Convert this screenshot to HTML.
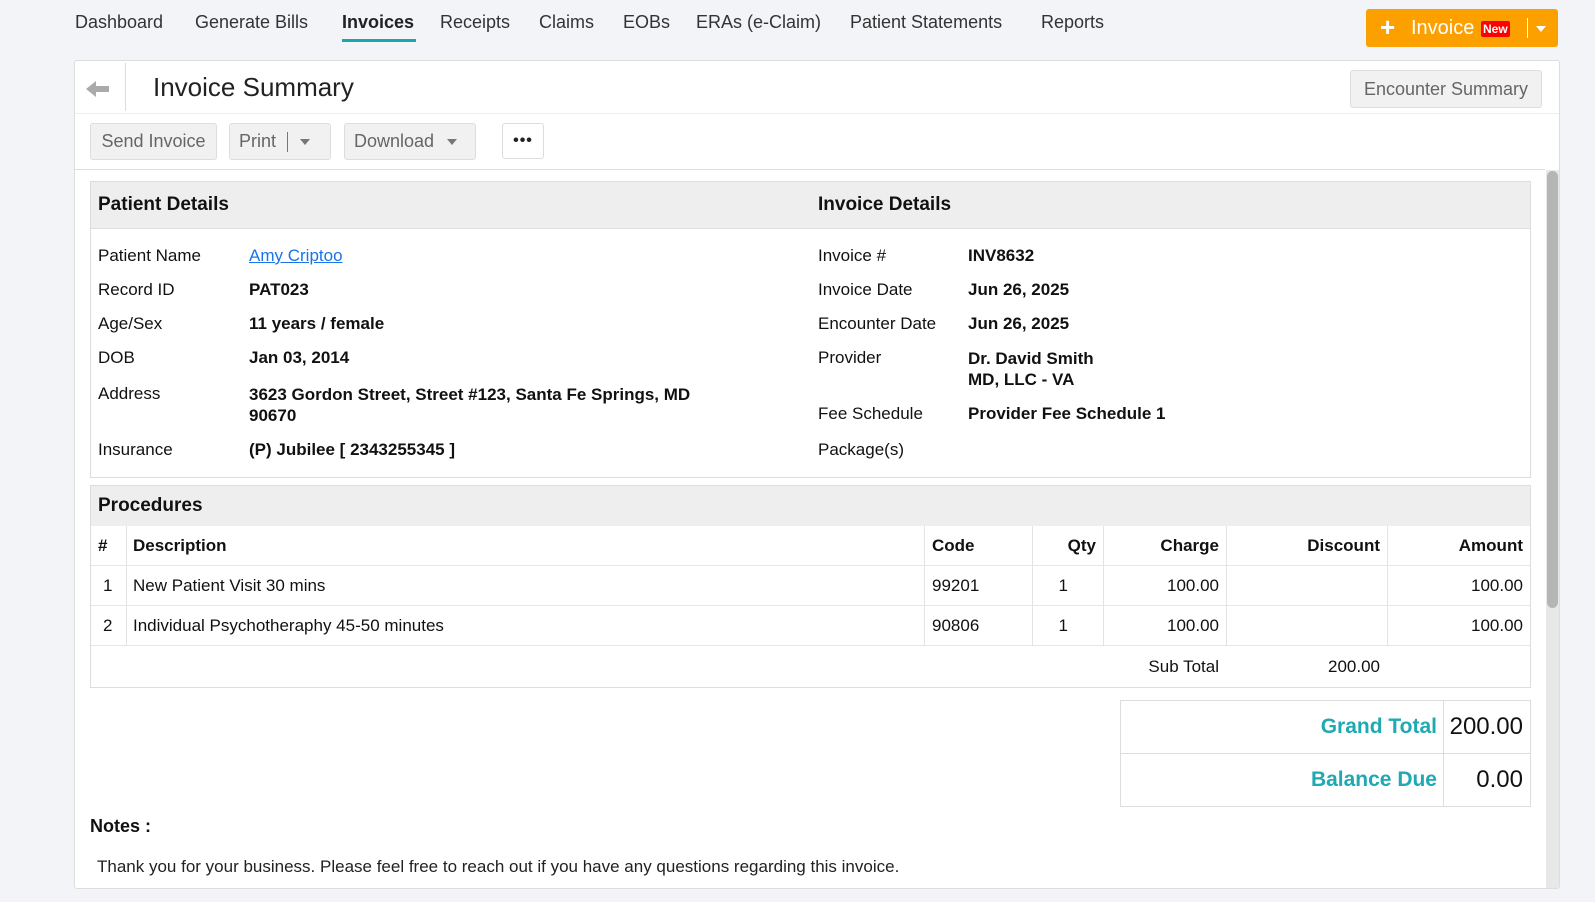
<!DOCTYPE html>
<html><head><meta charset="utf-8"><style>
*{box-sizing:border-box;margin:0;padding:0}
body{width:1595px;height:902px;background:#f3f4f8;font-family:"Liberation Sans",sans-serif;color:#111;position:relative;overflow:hidden;font-size:17px}
.a{position:absolute;white-space:nowrap}
.nav{top:12px;font-size:18px;color:#333}
.btn{position:absolute;background:#f1f1f1;border:1px solid #ddd;border-radius:3px;color:#666;font-size:18px;display:flex;align-items:center;justify-content:center}
.caret{display:inline-block;width:0;height:0;border-left:5px solid transparent;border-right:5px solid transparent;border-top:6px solid #777}
.box{position:absolute;border:1px solid #ddd;background:#fff}
.hd{background:#eee;border-bottom:1px solid #ddd;font-weight:bold;font-size:19px}
.lbl{font-size:17px;color:#111}
.val{font-size:17px;font-weight:bold}
.vl{position:absolute;top:40px;width:1px;background:#e3e3e3}
.hl{position:absolute;left:0;right:0;height:1px;background:#e6e6e6}
</style></head><body>
<div class="a nav" style="left:75px">Dashboard</div>
<div class="a nav" style="left:195px">Generate Bills</div>
<div class="a nav" style="left:342px;font-weight:bold;color:#222">Invoices</div>
<div class="a" style="left:342px;top:39px;width:74px;height:3px;background:#1aa6b0"></div>
<div class="a nav" style="left:440px">Receipts</div>
<div class="a nav" style="left:539px">Claims</div>
<div class="a nav" style="left:623px">EOBs</div>
<div class="a nav" style="left:696px">ERAs (e-Claim)</div>
<div class="a nav" style="left:850px">Patient Statements</div>
<div class="a nav" style="left:1041px">Reports</div>

<div class="a" style="left:1366px;top:9px;width:192px;height:38px;background:#fca000;border-radius:3px;color:#fff">
 <span class="a" style="left:14px;top:3px;font-size:26px;font-weight:bold">+</span>
 <span class="a" style="left:45px;top:8px;font-size:20px">Invoice</span>
 <span class="a" style="left:115px;top:12px;background:#f00;font-size:12px;font-weight:bold;padding:1px 2px;border-radius:2px">New</span>
 <span class="a" style="left:161px;top:9px;width:1px;height:20px;background:#fff"></span>
 <span class="a" style="left:170px;top:17px;width:0;height:0;border-left:5px solid transparent;border-right:5px solid transparent;border-top:6px solid #fff"></span>
</div>

<div class="a" style="left:74px;top:60px;width:1486px;height:829px;background:#fff;border:1px solid #ddd;border-radius:3px"></div>
<svg class="a" style="left:86px;top:80px" width="24" height="18" viewBox="0 0 24 18"><path d="M0 9 L10 1 V6 H23 V12 H10 V17 Z" fill="#aaa"/></svg>
<div class="a" style="left:125px;top:63px;width:1px;height:48px;background:#ddd"></div>
<div class="a" style="left:153px;top:72px;font-size:26px;color:#222">Invoice Summary</div>
<div class="btn" style="left:1350px;top:70px;width:192px;height:38px">Encounter Summary</div>
<div class="a" style="left:75px;top:113px;width:1484px;height:1px;background:#eee"></div>
<div class="btn" style="left:90px;top:123px;width:127px;height:37px">Send Invoice</div>
<div class="btn" style="left:229px;top:123px;width:102px;height:37px;justify-content:flex-start;padding-left:9px">Print<span style="width:1px;height:20px;background:#777;margin:0 12px 0 11px"></span><span class="caret"></span></div>
<div class="btn" style="left:344px;top:123px;width:132px;height:37px;justify-content:flex-start;padding-left:9px">Download<span class="caret" style="margin-left:13px"></span></div>
<div class="btn" style="left:502px;top:123px;width:42px;height:36px;background:#fff;color:#222;font-size:16px;font-weight:bold;letter-spacing:1px">•••</div>
<div class="a" style="left:75px;top:169px;width:1470px;height:1px;background:#ddd"></div>
<div class="a" style="left:1546px;top:170px;width:13px;height:718px;background:#e8e8e8"></div>
<div class="a" style="left:1547px;top:171px;width:11px;height:437px;background:#b5b5b5;border-radius:6px"></div>

<div class="box" style="left:90px;top:181px;width:1441px;height:297px">
 <div class="hd" style="height:47px;position:relative">
  <span class="a" style="left:7px;top:12px">Patient Details</span>
  <span class="a" style="left:727px;top:12px">Invoice Details</span>
 </div>
 <div class="a lbl" style="left:7px;top:64px">Patient Name</div><div class="a" style="left:158px;top:64px;color:#1a73e8;text-decoration:underline">Amy Criptoo</div>
 <div class="a lbl" style="left:7px;top:98px">Record ID</div><div class="a val" style="left:158px;top:98px">PAT023</div>
 <div class="a lbl" style="left:7px;top:132px">Age/Sex</div><div class="a val" style="left:158px;top:132px">11 years / female</div>
 <div class="a lbl" style="left:7px;top:166px">DOB</div><div class="a val" style="left:158px;top:166px">Jan 03, 2014</div>
 <div class="a lbl" style="left:7px;top:202px">Address</div><div class="a val" style="left:158px;top:202px;line-height:21px">3623 Gordon Street, Street #123, Santa Fe Springs, MD<br>90670</div>
 <div class="a lbl" style="left:7px;top:258px">Insurance</div><div class="a val" style="left:158px;top:258px">(P) Jubilee [ 2343255345 ]</div>
 <div class="a lbl" style="left:727px;top:64px">Invoice #</div><div class="a val" style="left:877px;top:64px">INV8632</div>
 <div class="a lbl" style="left:727px;top:98px">Invoice Date</div><div class="a val" style="left:877px;top:98px">Jun 26, 2025</div>
 <div class="a lbl" style="left:727px;top:132px">Encounter Date</div><div class="a val" style="left:877px;top:132px">Jun 26, 2025</div>
 <div class="a lbl" style="left:727px;top:166px">Provider</div><div class="a val" style="left:877px;top:166px;line-height:21px">Dr. David Smith<br>MD, LLC - VA</div>
 <div class="a lbl" style="left:727px;top:222px">Fee Schedule</div><div class="a val" style="left:877px;top:222px">Provider Fee Schedule 1</div>
 <div class="a lbl" style="left:727px;top:258px">Package(s)</div>
</div>

<div class="box" style="left:90px;top:485px;width:1441px;height:203px">
 <div class="hd" style="height:40px;position:relative;border-bottom:none"><span class="a" style="left:7px;top:9px">Procedures</span></div>
 <div class="hl" style="top:79px"></div><div class="hl" style="top:119px"></div><div class="hl" style="top:159px"></div>
 <div class="vl" style="left:35px;height:120px"></div>
 <div class="vl" style="left:833px;height:120px"></div>
 <div class="vl" style="left:941px;height:120px"></div>
 <div class="vl" style="left:1012px;height:120px"></div>
 <div class="vl" style="left:1135px;height:120px"></div>
 <div class="vl" style="left:1296px;height:120px"></div>
 <div class="a val" style="left:7px;top:50px">#</div>
 <div class="a val" style="left:42px;top:50px">Description</div>
 <div class="a val" style="left:841px;top:50px">Code</div>
 <div class="a val" style="left:941px;width:64px;text-align:right;top:50px">Qty</div>
 <div class="a val" style="left:1012px;width:116px;text-align:right;top:50px">Charge</div>
 <div class="a val" style="left:1135px;width:154px;text-align:right;top:50px">Discount</div>
 <div class="a val" style="left:1296px;width:136px;text-align:right;top:50px">Amount</div>
 <div class="a" style="left:12px;top:90px">1</div><div class="a" style="left:42px;top:90px">New Patient Visit 30 mins</div>
 <div class="a" style="left:841px;top:90px">99201</div><div class="a" style="left:941px;width:36px;text-align:right;top:90px">1</div>
 <div class="a" style="left:1012px;width:116px;text-align:right;top:90px">100.00</div><div class="a" style="left:1296px;width:136px;text-align:right;top:90px">100.00</div>
 <div class="a" style="left:12px;top:130px">2</div><div class="a" style="left:42px;top:130px">Individual Psychotheraphy 45-50 minutes</div>
 <div class="a" style="left:841px;top:130px">90806</div><div class="a" style="left:941px;width:36px;text-align:right;top:130px">1</div>
 <div class="a" style="left:1012px;width:116px;text-align:right;top:130px">100.00</div><div class="a" style="left:1296px;width:136px;text-align:right;top:130px">100.00</div>
 <div class="a" style="left:1012px;width:116px;text-align:right;top:171px">Sub Total</div>
 <div class="a" style="left:1135px;width:154px;text-align:right;top:171px">200.00</div>
</div>

<div class="box" style="left:1120px;top:700px;width:411px;height:107px">
 <div class="hl" style="top:52px;background:#ddd"></div>
 <div class="a" style="left:322px;top:0;width:1px;height:105px;background:#ddd"></div>
 <div class="a" style="left:0;width:316px;text-align:right;top:14px;color:#1ea9b3;font-weight:bold;font-size:21px">Grand Total</div>
 <div class="a" style="left:322px;width:80px;text-align:right;top:12px;font-size:24px">200.00</div>
 <div class="a" style="left:0;width:316px;text-align:right;top:67px;color:#1ea9b3;font-weight:bold;font-size:21px">Balance Due</div>
 <div class="a" style="left:322px;width:80px;text-align:right;top:65px;font-size:24px">0.00</div>
</div>

<div class="a" style="left:90px;top:816px;font-weight:bold;font-size:18px">Notes :</div>
<div class="a" style="left:97px;top:857px;font-size:17px;color:#222">Thank you for your business. Please feel free to reach out if you have any questions regarding this invoice.</div>
</body></html>
